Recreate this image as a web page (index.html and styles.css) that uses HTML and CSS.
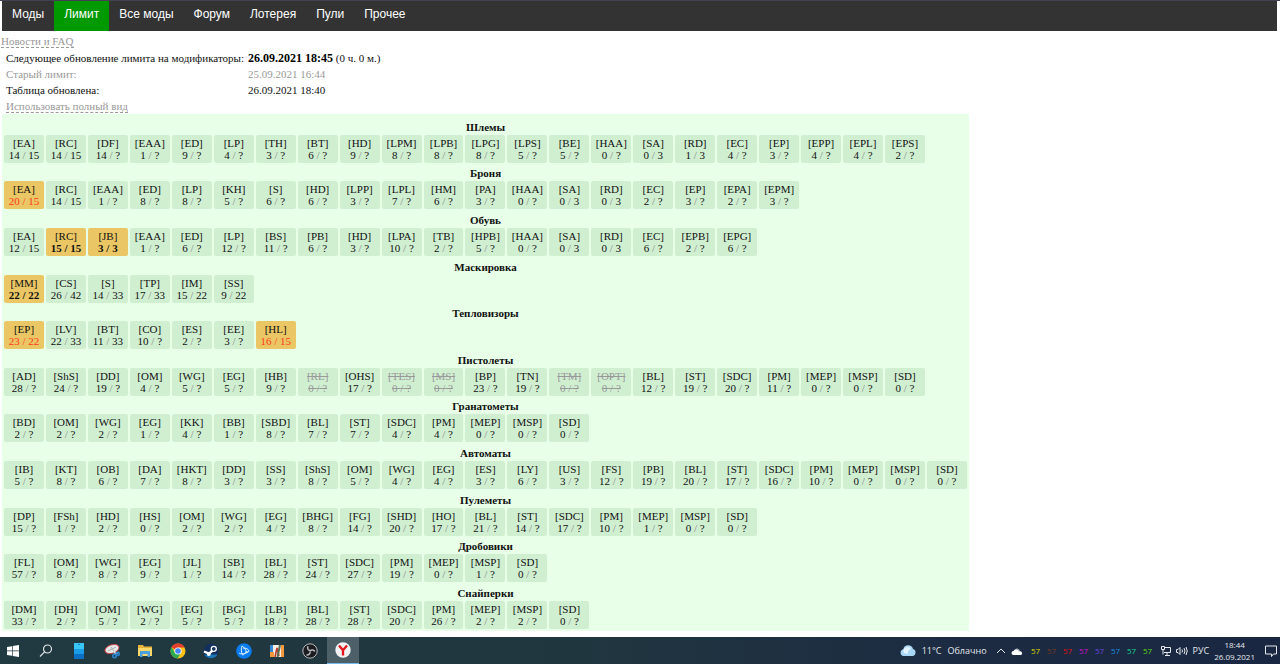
FILE: index.html
```html
<!DOCTYPE html>
<html lang="ru">
<head>
    <meta charset="UTF-8">
    <meta name="viewport" content="width=device-width, initial-scale=1.0">
    <title>Лимит</title>
    <link rel="stylesheet" href="styles.css">
</head>
<body>
    <main class="page">
        <nav class="menu">
            <a href="#">Моды</a>
            <a href="#" class="active">Лимит</a>
            <a href="#">Все моды</a>
            <a href="#">Форум</a>
            <a href="#">Лотерея</a>
            <a href="#">Пули</a>
            <a href="#">Прочее</a>
        </nav>

        <div class="news"><a href="#" class="dashed">Новости и FAQ</a></div>

        <table class="info">
            <tr>
                <th scope="row">Следующее обновление лимита на модификаторы:</th>
                <td><b>26.09.2021 18:45</b> (0 ч. 0 м.)</td>
            </tr>
            <tr class="old">
                <th scope="row">Старый лимит:</th>
                <td>25.09.2021 16:44</td>
            </tr>
            <tr>
                <th scope="row">Таблица обновлена:</th>
                <td>26.09.2021 18:40</td>
            </tr>
            <tr>
                <td colspan="2"><a href="#" class="dashed">Использовать полный вид</a></td>
            </tr>
        </table>

        <div class="limits-wrap">
            <table class="limits" id="limits"></table>
        </div>
    </main>

    <footer class="taskbar">
        <div class="apps">
            <button aria-label="Пуск">
                <svg viewBox="0 0 16 16"><path fill="#fff" d="M2 4l5-.8v4.4H2zM7.700 3.100L14 2v5.600H7.700zM2 8.300h5v4.500L2 12zM7.700 8.300H14V14l-6.300-1.100z"/></svg>
            </button>
            <button aria-label="Поиск">
                <svg viewBox="0 0 16 16" fill="none" stroke="#dfe4e6" stroke-width="1.200"><circle cx="9.500" cy="6" r="4"/><path d="M6.600 8.900L2 13.500"/></svg>
            </button>
            <button aria-label="Телефон">
                <svg viewBox="0 0 16 16"><path fill="#39c6f4" d="M3 0h10v6H3z"/><path fill="#1a9be6" d="M3 6h10v5H3z"/><path fill="#0b6fc4" d="M3 11h10v5H3z"/><path fill="#0d83c9" d="M7 1h2v1H7z"/></svg>
            </button>
            <button aria-label="Ножницы">
                <svg viewBox="0 0 16 16"><ellipse cx="8" cy="6" rx="7.200" ry="4.200" transform="rotate(-18 8 6)" fill="#e9e9e9" stroke="#c8474a" stroke-width="1"/><path d="M4 8l8-4M7 4l3 4" stroke="#a8adaf" stroke-width="1"/><path d="M9 8l3 3 3-2M11 8v3" stroke="#ddd" stroke-width="1.200" fill="none"/><circle cx="10.500" cy="13" r="1.700" fill="none" stroke="#2c86cf" stroke-width="1.600"/><circle cx="13.800" cy="11" r="1.500" fill="none" stroke="#2c86cf" stroke-width="1.600"/></svg>
            </button>
            <button aria-label="Проводник">
                <svg viewBox="0 0 16 16"><path fill="#e9b33a" d="M1 2h5l1 1.500h8V13H1z"/><path fill="#fcd869" d="M1 5h14v8H1z"/><path fill="#4ba0dd" d="M3 8h10v6h-2.500v-3h-5v3H3z"/></svg>
            </button>
            <button aria-label="Chrome">
                <svg viewBox="0 0 16 16"><circle cx="8" cy="8" r="7.500" fill="#fbc116"/><path fill="#e33b2e" d="M8 8L1.500 4.200A7.500 7.500 0 0 1 14.600 4.500H8z"/><path fill="#2da94f" d="M1.500 4.200A7.500 7.500 0 0 0 7.500 15.500L11 9.700 8 8 5 9.700z"/><circle cx="8" cy="8" r="3.600" fill="#fff"/><circle cx="8" cy="8" r="2.800" fill="#4285f4"/></svg>
            </button>
            <button aria-label="Steam">
                <svg viewBox="0 0 16 16"><circle cx="8" cy="8" r="7.500" fill="#14305f"/><path fill="#1b76b5" d="M1.500 11.500a7.500 7.500 0 0 0 13 0z"/><path d="M1 8.500l5 2.200 4.500-4" stroke="#fff" stroke-width="2.400" fill="none"/><circle cx="10.800" cy="5.800" r="2.500" fill="#14305f" stroke="#fff" stroke-width="1.300"/><circle cx="5.800" cy="11" r="2" fill="#fff"/></svg>
            </button>
            <button aria-label="Battle.net">
                <svg viewBox="0 0 16 16"><circle cx="8" cy="8" r="7.800" fill="#0a7cf0"/><g fill="none" stroke="#d8f0ff" stroke-width="1"><path d="M6 3c2 1 4 3.500 4.500 6.500M6 3c-1 2-1 6 .5 9M3 10c2 1.500 6 1 9-1.500M7 5c3 0 5.500 1 6 3-.5 1.500-2 2-4 2M6.500 12c1.500 0 3-2 4-4"/></g></svg>
            </button>
            <button aria-label="Монитор">
                <svg viewBox="0 0 16 16"><path fill="#3889d4" d="M1 2h4v7H1z"/><path fill="#f6eee2" d="M4 2h8v12H4z"/><path fill="#f39a3e" d="M12 2h3v12h-3zM1 9h4v5H1z"/><path d="M6 14l2-9 2 8" stroke="#bd3a32" stroke-width="1.600" fill="none"/><path d="M8.500 14L11 2" stroke="#54724f" stroke-width="2"/></svg>
            </button>
            <button aria-label="OBS">
                <svg viewBox="0 0 16 16"><circle cx="8" cy="8" r="7.200" fill="#1c1c20" stroke="#b9bdc0" stroke-width="1"/><g fill="none" stroke="#b9bdc0" stroke-width="1.500"><path d="M8 7.500c-2-.5-3-2-2-4.300M8.200 8c1.300-1.600 3.300-1.400 4.600.5M8 8.500c.5 2-.8 3.600-3.500 3.500"/></g></svg>
            </button>
            <button aria-label="Яндекс.Браузер" class="open">
                <svg viewBox="0 0 16 16"><circle cx="8" cy="8" r="7.700" fill="#f3f3f3"/><path d="M4 3.500l4 4.800 4-4.800M8 8v5.500" stroke="#e4161b" stroke-width="2.300" fill="none"/></svg>
            </button>
        </div>

        <div class="tray">
            <button class="weather">
                <svg viewBox="0 0 16 16"><path fill="#a8d6f5" d="M3.500 13a3.400 3.400 0 0 1-.2-6.700A5 5 0 0 1 13 6a3.600 3.600 0 0 1-.5 7z"/><path fill="#e3f4fe" d="M4 10a4 4 0 0 1 7-4 4 4 0 0 0-3 5z"/></svg>
                <span>11°C</span>
                <span>Облачно</span>
            </button>
            <svg class="small" viewBox="0 0 10 10"><path d="M1 7l4-4 4 4" stroke="#e4e8ec" fill="none"/></svg>
            <svg class="small cloud" viewBox="0 0 12 10"><path fill="#9aa1a8" d="M3 6a3 3 0 0 1 6-1l1 3H3z"/><path fill="#fff" d="M2.500 9a2 2 0 0 1 0-4A3 3 0 0 1 8 5.500 2 2 0 0 1 10 9z"/></svg>
            <div class="temps">
                <span class="yellow">57</span>
                <span class="brown">57</span>
                <span class="red">57</span>
                <span class="magenta">57</span>
                <span class="violet">57</span>
                <span class="blue">57</span>
                <span class="teal">57</span>
                <span class="green">57</span>
            </div>
            <svg class="small" viewBox="0 0 10 10" fill="none" stroke="#e4e8ec"><path d="M4 1.500h5.500v5H3M6 6.500v2.500M4 9.500h5M.5.500h3v3h-3zM2 3.500v5"/></svg>
            <svg class="small sound" viewBox="0 0 12 10" fill="none" stroke="#e4e8ec"><path d="M.5 3.500H2l2-2v7l-2-2H.5zM6 3.500q1 1.500 0 3M8 2q2 3 0 6M10 1q2.500 4 0 8"/></svg>
            <span class="lang">РУС</span>
            <div class="clock">
                <span>18:44</span>
                <span>26.09.2021</span>
            </div>
            <button class="notes" aria-label="Уведомления">
                <svg viewBox="0 0 12 12" fill="none" stroke="#e4e8ec"><path d="M.5 1h11v8H8.500L6.500 11.500V9h-6z"/></svg>
            </button>
        </div>
    </footer>

    <script>
        // "*" в начале - мод отключен
        const limits = {
            'Шлемы': 'EA 14/15, RC 14/15, DF 14/?, EAA 1/?, ED 9/?, LP 4/?, TH 3/?, BT 6/?, HD 9/?, LPM 8/?, LPB 8/?, LPG 8/?, LPS 5/?, BE 5/?, HAA 0/?, SA 0/3, RD 1/3, EC 4/?, EP 3/?, EPP 4/?, EPL 4/?, EPS 2/?',
            'Броня': 'EA 20/15, RC 14/15, EAA 1/?, ED 8/?, LP 8/?, KH 5/?, S 6/?, HD 6/?, LPP 3/?, LPL 7/?, HM 6/?, PA 3/?, HAA 0/?, SA 0/3, RD 0/3, EC 2/?, EP 3/?, EPA 2/?, EPM 3/?',
            'Обувь': 'EA 12/15, RC 15/15, JB 3/3, EAA 1/?, ED 6/?, LP 12/?, BS 11/?, PB 6/?, HD 3/?, LPA 10/?, TB 2/?, HPB 5/?, HAA 0/?, SA 0/3, RD 0/3, EC 6/?, EPB 2/?, EPG 6/?',
            'Маскировка': 'MM 22/22, CS 26/42, S 14/33, TP 17/33, IM 15/22, SS 9/22',
            'Тепловизоры': 'EP 23/22, LV 22/33, BT 11/33, CO 10/?, ES 2/?, EE 3/?, HL 16/15',
            'Пистолеты': 'AD 28/?, ShS 24/?, DD 19/?, OM 4/?, WG 5/?, EG 5/?, HB 9/?, *RL 0/?, OHS 17/?, *TES 0/?, *MS 0/?, BP 23/?, TN 19/?, *TM 0/?, *OPT 0/?, BL 12/?, ST 19/?, SDC 20/?, PM 11/?, MEP 0/?, MSP 0/?, SD 0/?',
            'Гранатометы': 'BD 2/?, OM 2/?, WG 2/?, EG 1/?, KK 4/?, BB 1/?, SBD 8/?, BL 7/?, ST 7/?, SDC 4/?, PM 4/?, MEP 0/?, MSP 0/?, SD 0/?',
            'Автоматы': 'IB 5/?, KT 8/?, OB 6/?, DA 7/?, HKT 8/?, DD 3/?, SS 3/?, ShS 8/?, OM 5/?, WG 4/?, EG 4/?, ES 3/?, LY 6/?, US 3/?, FS 12/?, PB 19/?, BL 20/?, ST 17/?, SDC 16/?, PM 10/?, MEP 0/?, MSP 0/?, SD 0/?',
            'Пулеметы': 'DP 15/?, FSh 1/?, HD 2/?, HS 0/?, OM 2/?, WG 2/?, EG 4/?, BHG 8/?, FG 14/?, SHD 20/?, HO 17/?, BL 21/?, ST 14/?, SDC 17/?, PM 10/?, MEP 1/?, MSP 0/?, SD 0/?',
            'Дробовики': 'FL 57/?, OM 8/?, WG 8/?, EG 9/?, JL 1/?, SB 14/?, BL 28/?, ST 24/?, SDC 27/?, PM 19/?, MEP 0/?, MSP 1/?, SD 0/?',
            'Снайперки': 'DM 33/?, DH 2/?, OM 5/?, WG 2/?, EG 5/?, BG 5/?, LB 18/?, BL 28/?, ST 28/?, SDC 20/?, PM 26/?, MEP 2/?, MSP 2/?, SD 0/?'
        };
        const columns = 23;

        function cell(item) {
            const off = item.startsWith('*');
            const [name, value] = item.replace('*', '').split(' ');
            const [used, max] = value.split('/');
            let cls = 'mod';
            if (off) cls += ' off';
            if (Number(used) === Number(max)) cls += ' full';
            if (Number(used) > Number(max)) cls += ' over';
            return `<td class="${cls}">[${name}]<br><span class="count">${used} <i>/</i> ${max}</span></td>`;
        }

        let html = '';
        for (const group in limits) {
            const cells = limits[group].split(', ').map(cell).join('');
            html += `<tr><th colspan="${columns}">${group}</th></tr><tr class="mods">${cells}</tr>`;
        }
        document.getElementById('limits').innerHTML = html;
    </script>
</body>
</html>
```
FILE: styles.css
```css
* {
    box-sizing: border-box;
}

body {
    display: flex;
    flex-direction: column;
    min-height: 100vh;
    margin: 0;
    font-family: "Liberation Serif", "Times New Roman", serif;
    font-size: 11px;
    line-height: 12px;
    color: #111;
    background: #fff;
}

button {
    border: none;
    padding: 0;
    background: none;
    color: inherit;
    font: inherit;
    cursor: pointer;
}

.page {
    display: flex;
    flex-direction: column;
    flex: 1;
    border-top: 1px solid #434152;
    padding-bottom: 6px;
}

/* Верхнее меню */
.menu {
    display: flex;
    margin: 0 3px 0 2px;
    background: #333;
    font-family: "Liberation Sans", Arial, sans-serif;
    font-size: 12px;
}

.menu a {
    height: 30px;
    padding: 0 10px;
    line-height: 27px;
    color: #fff;
    text-decoration: none;
}

.menu a:hover {
    background: #111;
}

.menu a.active {
    background: #090;
}

.dashed {
    color: #999;
    text-decoration: none;
    border-bottom: 1px dashed #999;
}

.news {
    margin: 4px 1px 3px;
}

/* Информация об обновлении */
.info {
    align-self: flex-start;
    margin-left: 5px;
    border-spacing: 0;
}

.info th,
.info td {
    height: 16px;
    padding: 0 3px 0 1px;
    text-align: left;
    font-weight: normal;
}

.info b {
    font-size: 12px;
    color: #000;
}

.info .old {
    color: #999;
}

/* Таблица лимитов */
.limits-wrap {
    display: flex;
    flex: 1;
    margin: 0 2px;
}

.limits {
    table-layout: fixed;
    width: 100%;
    max-width: 967px;
    padding-top: 2px;
    border-spacing: 2px;
    background: #e8ffe8;
}

.limits th,
.limits td {
    padding: 0;
    text-align: center;
}

.limits th {
    vertical-align: bottom;
}

.mods {
    height: 28px;
}

.mod {
    border-radius: 2px;
    background: #d0efd1;
}

.mod i {
    font-style: normal;
    color: #888;
}

.mod.full,
.mod.over {
    background: #eac764;
}

.mod.full .count {
    font-weight: bold;
}

.mod.full i {
    color: inherit;
}

.mod.over .count,
.mod.over i {
    color: #ff3a1c;
}

.mod.off,
.mod.off i {
    color: #999;
}

.mod.off {
    text-decoration: line-through;
}

/* Панель задач */
.taskbar {
    display: flex;
    justify-content: space-between;
    height: 27px;
    background: linear-gradient(90deg, #213941, #20363f 45%, #1c2b42 75%, #1a2742);
    color: #e4e8ec;
    font-family: "Open Sans", "Segoe UI", sans-serif;
    font-size: 9px;
}

.apps {
    display: flex;
    gap: 1px;
    margin-left: -3px;
}

.apps button {
    display: flex;
    align-items: center;
    justify-content: center;
    width: 32px;
}

.apps svg,
.weather svg {
    width: 16px;
    height: 16px;
}

.apps .open {
    background: #4d6068;
    border-bottom: 1px solid #76b9ed;
}

.tray {
    display: flex;
    align-items: center;
    gap: 5px;
    padding-right: 3px;
}

.weather {
    display: flex;
    align-items: center;
    gap: 6px;
    margin-right: 4px;
}

.small {
    width: 10px;
    height: 10px;
}

.small.sound,
.small.cloud {
    width: 12px;
}

.temps {
    display: flex;
    font-size: 8px;
}

.temps span {
    width: 16px;
    text-align: center;
}

.yellow { color: #d8d800; }
.brown { color: #7a3a1c; }
.red { color: #e01010; }
.magenta { color: #d010d0; }
.violet { color: #6a48e0; }
.blue { color: #1890e0; }
.teal { color: #10d090; }
.green { color: #58d810; }

.clock {
    display: flex;
    flex-direction: column;
    align-items: center;
    font-size: 8px;
}

.notes {
    display: flex;
    margin-left: 5px;
}

.notes svg {
    width: 12px;
    height: 12px;
}
```
